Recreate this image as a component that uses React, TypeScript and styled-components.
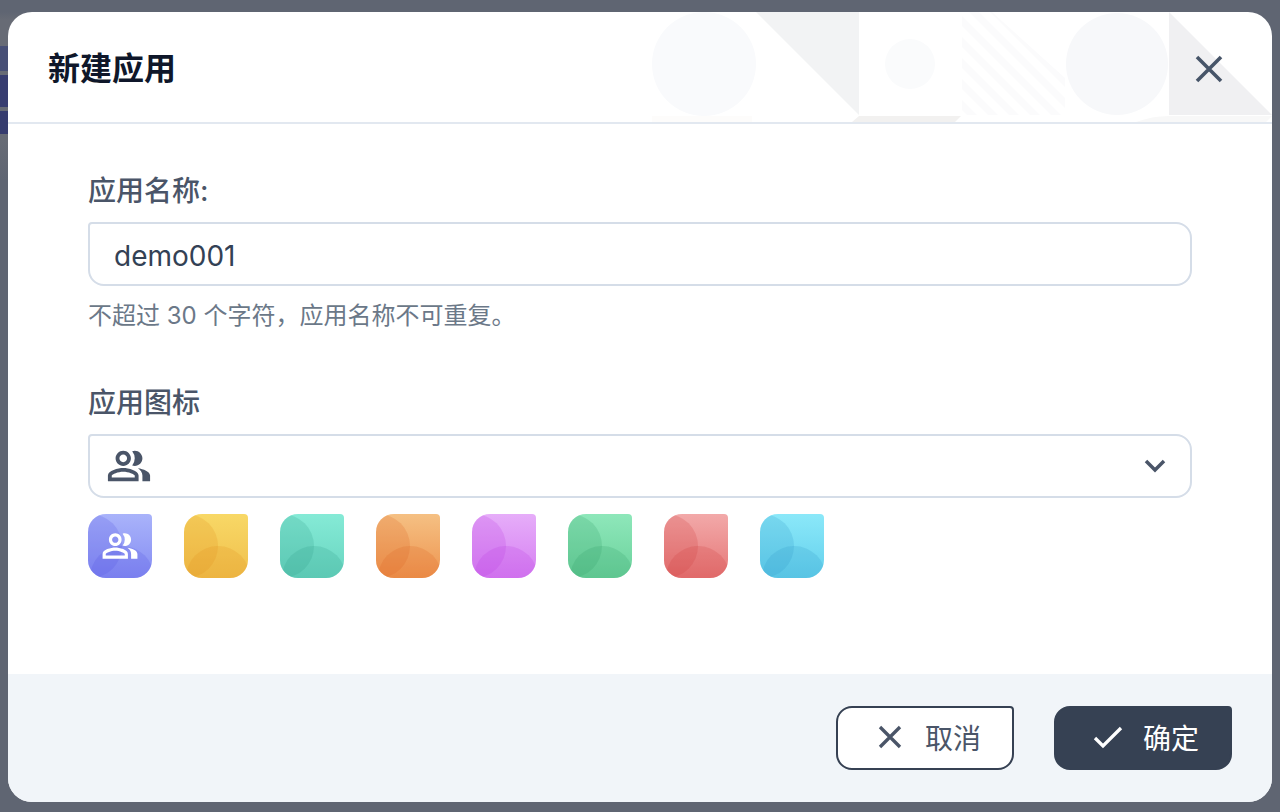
import React, { useState } from "react";
import styled, { createGlobalStyle } from "styled-components";
import { MdOutlinePeopleAlt } from "react-icons/md";

const GlobalStyle = createGlobalStyle`
  *, *::before, *::after { box-sizing: border-box; }
  body {
    margin: 0;
    background: #5f6572;
    font-family: Inter, "Noto Sans CJK SC", sans-serif;
    color: #4a5568;
  }
  button, input, select { font: inherit; color: inherit; }
`;

const Page = styled.div`
  position: relative;
  min-height: 100vh;
  padding: 12px 8px 10px;
  display: flex;
  flex-direction: column;
`;

const Underlay = styled.div`
  position: absolute;
  top: 0;
  left: 0;
  width: 40px;
  padding-top: 46px;
  display: flex;
  flex-direction: column;
  gap: 4px;
  background: linear-gradient(#5f6572 12px, #676b75 20px, #676b75 140px, #5f6572);
  height: 180px;
`;

const UnderlayItem = styled.div<{ $tone: string; $height: number }>`
  height: ${(p) => p.$height}px;
  background: ${(p) => p.$tone};
`;

const Dialog = styled.form`
  position: relative;
  flex: 1;
  display: flex;
  flex-direction: column;
  border-radius: 24px;
  overflow: hidden;
  background: #fff;
`;

const Header = styled.header`
  position: relative;
  display: flex;
  align-items: center;
  justify-content: space-between;
  height: 112px;
  padding: 4px 40px 0;
  border-bottom: 2px solid #e2e8f0;
`;

const Pattern = styled.svg`
  position: absolute;
  top: 0;
  right: 0;
`;

const Title = styled.h1`
  margin: 0;
  font-size: 32px;
  line-height: 48px;
  font-weight: 600;
  color: #0f172a;
`;

const CloseButton = styled.button`
  position: relative;
  display: flex;
  padding: 0;
  border: 0;
  background: none;
  color: #475569;
  cursor: pointer;
`;

const Body = styled.div`
  flex: 1;
  display: flex;
  flex-direction: column;
  gap: 48px;
  padding: 46px 80px 48px;
`;

const Field = styled.div`
  display: flex;
  flex-direction: column;
`;

const Label = styled.label`
  margin-bottom: 10px;
  font-size: 28px;
  line-height: 42px;
  font-weight: 500;
  color: #4a5568;
`;

const TextInput = styled.input`
  height: 64px;
  padding: 4px 24px 0;
  border: 2px solid #d5dde8;
  border-radius: 4px 16px 16px 16px;
  background: #fff;
  font-size: 28px;
  color: #334155;
  outline: none;
`;

const Hint = styled.p`
  margin: 12px 0 0;
  font-size: 24px;
  line-height: 36px;
  color: #6b7888;
`;

const SelectBox = styled.div`
  display: grid;
  grid-template-columns: auto 1fr auto;
  align-items: center;
  color: #4a5568;

  > * { grid-row: 1; }
  > svg { pointer-events: none; z-index: 1; }
  > svg:first-of-type { grid-column: 1; margin-left: 18px; }
  > svg:last-of-type { grid-column: 3; margin-right: 22px; }
`;

const Select = styled.select`
  grid-column: 1 / -1;
  height: 64px;
  border: 2px solid #d5dde8;
  border-radius: 4px 16px 16px 16px;
  background: #fff;
  appearance: none;
  outline: none;
  cursor: pointer;
`;

const Swatches = styled.div`
  display: flex;
  flex-wrap: wrap;
  gap: 32px;
  margin-top: 16px;
`;

const Swatch = styled.label<{ $from: string; $to: string }>`
  display: grid;
  place-items: center;
  width: 64px;
  height: 64px;
  border-radius: 18px 4px 18px 18px;
  overflow: hidden;
  background: linear-gradient(${(p) => p.$from}, ${(p) => p.$to});
  color: #fff;
  cursor: pointer;

  > * { grid-area: 1 / 1; }
`;

const SwatchInput = styled.input`
  width: 64px;
  height: 64px;
  margin: 0;
  opacity: 0;
  cursor: pointer;
`;

const Footer = styled.footer`
  display: flex;
  align-items: center;
  justify-content: flex-end;
  gap: 40px;
  height: 128px;
  padding: 0 40px;
  background: #f1f5f9;
`;

const ActionButton = styled.button<{ $primary?: boolean }>`
  display: flex;
  align-items: center;
  justify-content: center;
  gap: 20px;
  min-width: 178px;
  height: 64px;
  padding: 2px 30px 0 34px;
  border: 2px solid #364153;
  border-radius: 16px 4px 16px 16px;
  background: ${(p) => (p.$primary ? "#364153" : "#fff")};
  color: ${(p) => (p.$primary ? "#fff" : "#4a5568")};
  font-size: 28px;
  line-height: 40px;
  cursor: pointer;
`;

const swatches = [
  { name: "蓝紫", from: "#a9b3fa", to: "#858cf3", shade: "#4f4ee0" },
  { name: "黄色", from: "#f8d866", to: "#f0bf4c", shade: "#e08a1a" },
  { name: "青色", from: "#85ead6", to: "#68d5c0", shade: "#2f9a88" },
  { name: "橙色", from: "#f5c083", to: "#ee9550", shade: "#de5f1c" },
  { name: "紫色", from: "#e6adf9", to: "#d67ff2", shade: "#b935e0" },
  { name: "绿色", from: "#8ee7ba", to: "#6bd29c", shade: "#2f9a66" },
  { name: "红色", from: "#f2a9a9", to: "#e67777", shade: "#cf3838" },
  { name: "天蓝", from: "#8be8f9", to: "#63d0ec", shade: "#2d98c8" },
];

const stripes = [-93, -72, -51, -30, -9, 12, 33];

function HeaderPattern() {
  return (
    <Pattern width="620" height="110" viewBox="0 0 620 110" aria-hidden="true">
      <defs>
        <clipPath id="striped"><path d="M310 0H340L413 66V103H310Z" /></clipPath>
      </defs>
      <rect x="0" y="104" width="100" height="6" fill="#fdfcfb" />
      <circle cx="52" cy="52" r="52" fill="#f9fafc" />
      <path d="M104 0H207V103Z" fill="#f2f3f4" />
      <path d="M207 104H309L303 110H200Z" fill="#f2f1f0" />
      <circle cx="258" cy="52" r="25" fill="#fafbfc" />
      <g clipPath="url(#striped)" stroke="#fbfbfc" strokeWidth="7">
        {stripes.map((s) => (
          <path key={s} d={`M${300 + s} -10L${426 + s} 116`} />
        ))}
      </g>
      <circle cx="465" cy="52" r="51" fill="#f7f8fa" />
      <path d="M517 0L620 103H517Z" fill="#f0f0f2" />
      <path d="M484 110Q500 104 517 104H620L614 110Z" fill="#f8f8f8" />
    </Pattern>
  );
}

function StrokeIcon({ d, width, height, stroke }: { d: string; width: number; height: number; stroke: number }) {
  return (
    <svg width={width} height={height} viewBox={`0 0 ${width} ${height}`} fill="none" stroke="currentColor" strokeWidth={stroke} aria-hidden="true">
      <path d={d} />
    </svg>
  );
}

export default function App() {
  const [name, setName] = useState("demo001");
  const [color, setColor] = useState(0);
  return (
    <>
      <GlobalStyle />
      <Page>
        <Underlay aria-hidden="true">
          <UnderlayItem $tone="#474f76" $height={25} />
          <UnderlayItem $tone="#373d70" $height={32} />
          <UnderlayItem $tone="#363c6e" $height={23} />
        </Underlay>
        <Dialog role="dialog" aria-labelledby="dialog-title" onSubmit={(e) => e.preventDefault()}>
          <Header>
            <HeaderPattern />
            <Title id="dialog-title">新建应用</Title>
            <CloseButton type="button" aria-label="关闭">
              <StrokeIcon width={46} height={46} stroke={3.6} d="M11 11L35 35M35 11L11 35" />
            </CloseButton>
          </Header>
          <Body>
            <Field>
              <Label htmlFor="app-name">应用名称:</Label>
              <TextInput id="app-name" value={name} maxLength={30} onChange={(e) => setName(e.target.value)} aria-describedby="app-name-hint" />
              <Hint id="app-name-hint">不超过 30 个字符，应用名称不可重复。</Hint>
            </Field>
            <Field>
              <Label htmlFor="app-icon">应用图标</Label>
              <SelectBox>
                <Select id="app-icon" defaultValue="people">
                  <option value="people" aria-label="用户" />
                </Select>
                <MdOutlinePeopleAlt size={46} aria-hidden="true" />
                <StrokeIcon width={30} height={30} stroke={3.5} d="M6 10L15 19L24 10" />
              </SelectBox>
              <Swatches role="radiogroup" aria-label="图标颜色">
                {swatches.map((s, i) => (
                  <Swatch key={s.name} $from={s.from} $to={s.to}>
                    <svg width="64" height="64" viewBox="0 0 64 64" fill={s.shade} fillOpacity="0.2" aria-hidden="true">
                      <circle cx="2" cy="32" r="32" />
                      <circle cx="34" cy="64" r="32" />
                    </svg>
                    {color === i && <MdOutlinePeopleAlt size={38} aria-hidden="true" />}
                    <SwatchInput type="radio" name="icon-color" aria-label={s.name} checked={color === i} onChange={() => setColor(i)} />
                  </Swatch>
                ))}
              </Swatches>
            </Field>
          </Body>
          <Footer>
            <ActionButton type="button">
              <StrokeIcon width={32} height={32} stroke={3.3} d="M7 4L27 24M27 4L7 24" />
              取消
            </ActionButton>
            <ActionButton type="submit" $primary>
              <StrokeIcon width={32} height={32} stroke={3.3} d="M4 15L12 23L30 5" />
              确定
            </ActionButton>
          </Footer>
        </Dialog>
      </Page>
    </>
  );
}
